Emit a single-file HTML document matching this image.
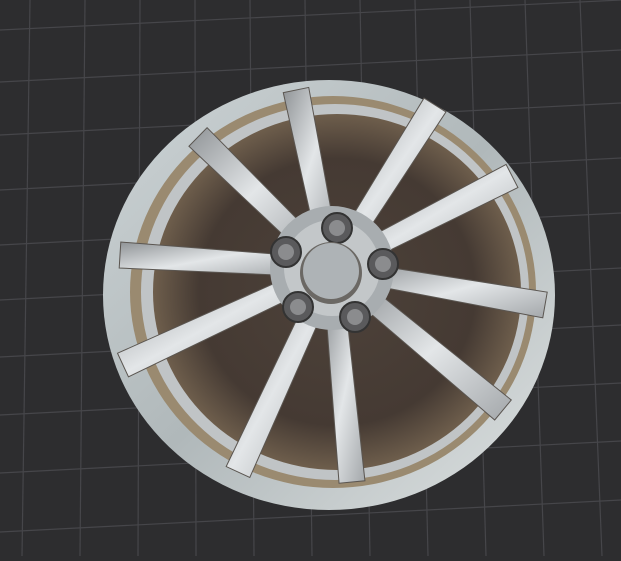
<!DOCTYPE html><html><head><style>html,body{margin:0;padding:0;background:#2d2d2f;overflow:hidden}</style></head><body>
<svg id="s" width="621" height="556" viewBox="0 0 621 556" xmlns="http://www.w3.org/2000/svg">
<defs>
<linearGradient id="rim" x1="0" y1="0" x2="1" y2="1"><stop offset="0" stop-color="#cdd4d6"/><stop offset="0.5" stop-color="#b0b8ba"/><stop offset="1" stop-color="#dde1e1"/></linearGradient>
<radialGradient id="inner" cx="0.5" cy="0.5" r="0.5"><stop offset="0" stop-color="#4d423a"/><stop offset="0.75" stop-color="#453a33"/><stop offset="1" stop-color="#6e5e4c"/></radialGradient>
<linearGradient id="sp" x1="0" y1="0" x2="1" y2="1"><stop offset="0" stop-color="#8f9396"/><stop offset="0.5" stop-color="#e3e6e8"/><stop offset="1" stop-color="#a3a7aa"/></linearGradient>
</defs>
<rect width="621" height="556" fill="#2d2d2f"/>
<g stroke="#46464a" stroke-width="1.2">
<line x1="0" y1="30" x2="621" y2="0"/><line x1="0" y1="82" x2="621" y2="50"/><line x1="0" y1="135" x2="621" y2="103"/><line x1="0" y1="190" x2="621" y2="158"/><line x1="0" y1="245" x2="621" y2="213"/><line x1="0" y1="300" x2="621" y2="268"/><line x1="0" y1="357" x2="621" y2="325"/><line x1="0" y1="415" x2="621" y2="383"/><line x1="0" y1="473" x2="621" y2="441"/><line x1="0" y1="532" x2="621" y2="500"/>
<line x1="30" y1="0" x2="22" y2="556"/><line x1="85" y1="0" x2="80" y2="556"/><line x1="140" y1="0" x2="138" y2="556"/><line x1="195" y1="0" x2="196" y2="556"/><line x1="250" y1="0" x2="254" y2="556"/><line x1="305" y1="0" x2="312" y2="556"/><line x1="360" y1="0" x2="370" y2="556"/><line x1="415" y1="0" x2="428" y2="556"/><line x1="470" y1="0" x2="486" y2="556"/><line x1="525" y1="0" x2="544" y2="556"/><line x1="580" y1="0" x2="602" y2="556"/>
</g>
<ellipse cx="329" cy="295" rx="226" ry="215" fill="url(#rim)"/>
<ellipse cx="333" cy="292" rx="203" ry="196" fill="#9a8a70"/>
<ellipse cx="335" cy="292" rx="194" ry="188" fill="#c0c4c6"/>
<ellipse cx="337" cy="292" rx="184" ry="178" fill="url(#inner)"/>
<g id="spokes" fill="url(#sp)" stroke="#5a5550" stroke-width="1"></g>
<circle cx="332" cy="268" r="62" fill="#a8adb0"/>
<circle cx="332" cy="268" r="48" fill="#c3c7c9"/>
<g fill="#5a5a5c" stroke="#333" stroke-width="2">
<circle cx="337" cy="228" r="15"/><circle cx="383" cy="264" r="15"/><circle cx="355" cy="317" r="15"/><circle cx="298" cy="307" r="15"/><circle cx="286" cy="252" r="15"/>
</g>
<g fill="#8b8c8e">
<circle cx="337" cy="228" r="8"/><circle cx="383" cy="264" r="8"/><circle cx="355" cy="317" r="8"/><circle cx="298" cy="307" r="8"/><circle cx="286" cy="252" r="8"/>
</g>
<circle cx="331" cy="273" r="31" fill="#6b6864"/>
<circle cx="331" cy="271" r="28" fill="#aeb3b6"/>
</svg>
<script>
var tips=[[296,90],[435,105],[512,176],[545,305],[503,410],[352,482],[238,472],[123,365],[120,255],[198,137]];
var cx=332,cy=268,g=document.getElementById('spokes'),h='';
tips.forEach(function(t){var dx=t[0]-cx,dy=t[1]-cy,L=Math.hypot(dx,dy),nx=-dy/L,ny=dx/L;
var sx=cx+dx*0.15,sy=cy+dy*0.15,w1=10,w2=13;
h+='<polygon points="'+(sx+nx*w1)+','+(sy+ny*w1)+' '+(t[0]+nx*w2)+','+(t[1]+ny*w2)+' '+(t[0]-nx*w2)+','+(t[1]-ny*w2)+' '+(sx-nx*w1)+','+(sy-ny*w1)+'"/>';});
g.innerHTML=h;
</script>
</body></html>
